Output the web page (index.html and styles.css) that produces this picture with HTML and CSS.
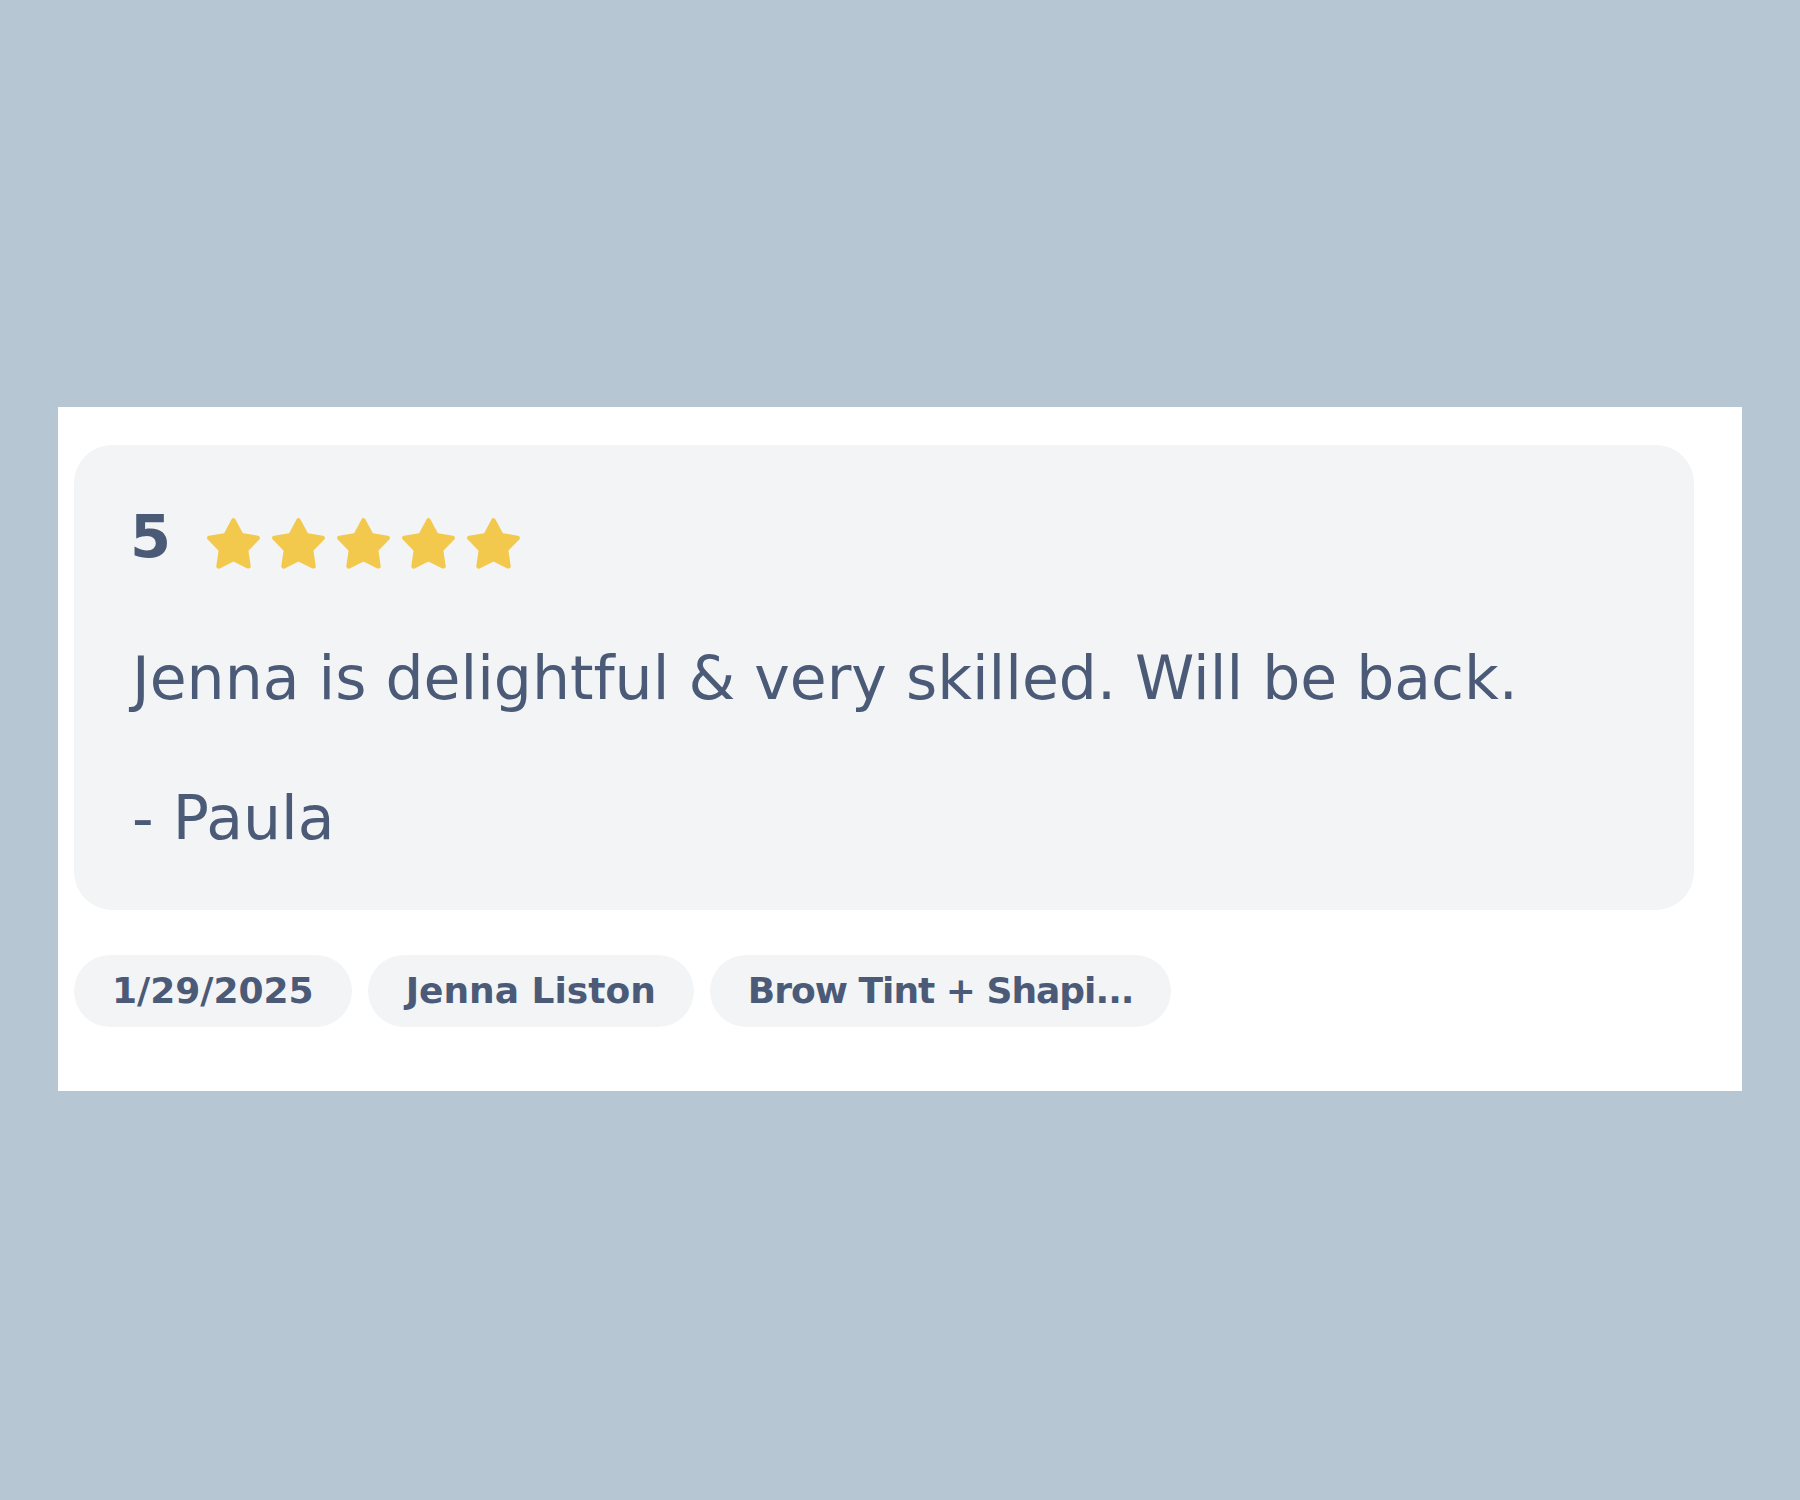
FILE: index.html
```html
<!DOCTYPE html>
<html>
<head>
<meta charset="utf-8">
<link rel="stylesheet" href="styles.css">
</head>
<body>
<div class="page">
  <section class="panel">
    <div class="review-card">
      <div class="rating">
        <span class="score">5</span>
        <div class="stars">
          <svg class="star" viewBox="0.5 0.5 23 22"><polygon points="12,1.5 15.35,7.89 22.46,9.1 17.42,14.26 18.47,21.4 12,18.2 5.53,21.4 6.58,14.26 1.54,9.1 8.65,7.89"/></svg>
          <svg class="star" viewBox="0.5 0.5 23 22"><polygon points="12,1.5 15.35,7.89 22.46,9.1 17.42,14.26 18.47,21.4 12,18.2 5.53,21.4 6.58,14.26 1.54,9.1 8.65,7.89"/></svg>
          <svg class="star" viewBox="0.5 0.5 23 22"><polygon points="12,1.5 15.35,7.89 22.46,9.1 17.42,14.26 18.47,21.4 12,18.2 5.53,21.4 6.58,14.26 1.54,9.1 8.65,7.89"/></svg>
          <svg class="star" viewBox="0.5 0.5 23 22"><polygon points="12,1.5 15.35,7.89 22.46,9.1 17.42,14.26 18.47,21.4 12,18.2 5.53,21.4 6.58,14.26 1.54,9.1 8.65,7.89"/></svg>
          <svg class="star" viewBox="0.5 0.5 23 22"><polygon points="12,1.5 15.35,7.89 22.46,9.1 17.42,14.26 18.47,21.4 12,18.2 5.53,21.4 6.58,14.26 1.54,9.1 8.65,7.89"/></svg>
        </div>
      </div>
      <p class="review-text">Jenna is delightful &amp; very skilled. Will be back.</p>
      <p class="review-text author">- Paula</p>
    </div>
    <div class="chips">
      <span class="chip">1/29/2025</span>
      <span class="chip">Jenna Liston</span>
      <span class="chip chip-service">Brow Tint + Shapi...</span>
    </div>
  </section>
</div>
</body>
</html>
```
FILE: styles.css
```css
html, body {
  margin: 0;
  padding: 0;
}
body {
  background: #b7c6d3;
  font-family: "DejaVu Sans", sans-serif;
  color: #4b5a76;
  width: 1800px;
  height: 1500px;
  overflow: hidden;
}
.page {
  padding: 407px 0 0 58px;
}
.panel {
  box-sizing: border-box;
  width: 1684px;
  height: 684px;
  background: #ffffff;
  padding: 38px 48px 0 16px;
}
.review-card {
  background: #f3f4f6;
  border-radius: 38px;
  padding: 62px 58px 57px 58px;
}
.rating {
  display: flex;
  align-items: flex-start;
  gap: 36px;
  height: 60px;
}
.score {
  font-weight: 700;
  font-size: 59px;
  line-height: 60px;
  margin-left: -2px;
}
.stars {
  display: flex;
  gap: 12px;
  margin-top: 11px;
}
.star {
  display: block;
  width: 53px;
  height: 51px;
  fill: #f2c94c;
  stroke: #f2c94c;
  stroke-width: 2;
  stroke-linejoin: round;
}
.review-text {
  margin: 76px 0 0 0;
  font-size: 60px;
  line-height: 70px;
}
.author {
  margin-top: 70px;
}
.chips {
  display: flex;
  gap: 16px;
  margin-top: 45px;
}
.chip {
  height: 72px;
  line-height: 72px;
  padding: 0 38px;
  border-radius: 36px;
  background: #f3f4f6;
  font-weight: 700;
  font-size: 36px;
  white-space: nowrap;
}
.chip-service {
  letter-spacing: -1px;
}
```
